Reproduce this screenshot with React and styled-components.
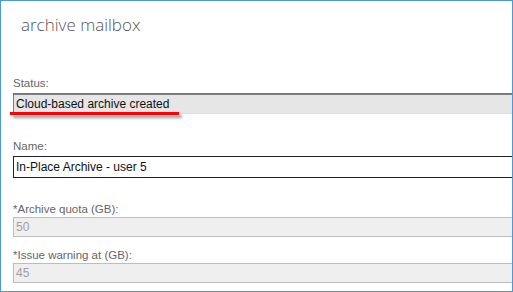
import styled, { createGlobalStyle } from "styled-components";

const GlobalStyle = createGlobalStyle`
  html, body {
    margin: 0;
    padding: 0;
    background: #fff;
  }
  body {
    font-family: "Liberation Sans", Arial, sans-serif;
  }
`;

const Frame = styled.div`
  position: relative;
  width: 513px;
  height: 292px;
  box-sizing: border-box;
  border: 1px solid #4d97dc;
  overflow: hidden;
  background: #fff;
  padding: 0 0 0 12px;
`;

const Title = styled.h1`
  margin: 0 0 0 8px;
  padding-top: 12px;
  font-family: "Open Sans", "Noto Sans", sans-serif;
  font-size: 17px;
  line-height: 24px;
  font-weight: 300;
  color: #555;
`;

const Form = styled.div`
  display: flex;
  flex-direction: column;
  margin-top: 39px;
`;

const Field = styled.div`
  display: flex;
  flex-direction: column;
  gap: ${(p) => p.$gap ?? 2}px;
  margin-bottom: ${(p) => p.$space || 0}px;
`;

const Label = styled.div`
  font-size: 11.5px;
  line-height: 15px;
  color: #666;
`;

const Box = styled.div`
  position: relative;
  box-sizing: border-box;
  width: 540px;
  height: ${(p) => p.$h || 20}px;
  padding: 0 2px;
  font-size: 12px;
  display: flex;
  align-items: center;
  color: ${(p) => (p.$disabled ? "#a0a0a0" : "#111")};
  background: ${(p) => (p.$readonly ? "#e6e6e6" : p.$disabled ? "#efefef" : "#fff")};
  border: 1px solid ${(p) => (p.$disabled ? "#bdbdbd" : p.$readonly ? "#dedede" : "#222")};
  ${(p) => p.$readonly && "border-top: 2px solid #7a7a7a; border-left-color: #7a7a7a;"}
`;

const Marker = styled.div`
  position: absolute;
  left: -4px;
  top: 17px;
  width: 169px;
  height: 3px;
  background: #f00;
  box-shadow: 3px 3px 3px rgba(0, 0, 0, 0.4);
`;

export default function App() {
  return (
    <>
      <GlobalStyle />
      <Frame>
        <Title>archive mailbox</Title>
        <Form>
          <Field $space={25}>
            <Label>Status:</Label>
            <Box $readonly $h={21}>
              Cloud-based archive created
              <Marker />
            </Box>
          </Field>
          <Field $space={24}>
            <Label>Name:</Label>
            <Box $h={22}>In-Place Archive - user 5</Box>
          </Field>
          <Field $space={11} $gap={0}>
            <Label>*Archive quota (GB):</Label>
            <Box $disabled>50</Box>
          </Field>
          <Field $gap={0}>
            <Label>*Issue warning at (GB):</Label>
            <Box $disabled>45</Box>
          </Field>
        </Form>
      </Frame>
    </>
  );
}
